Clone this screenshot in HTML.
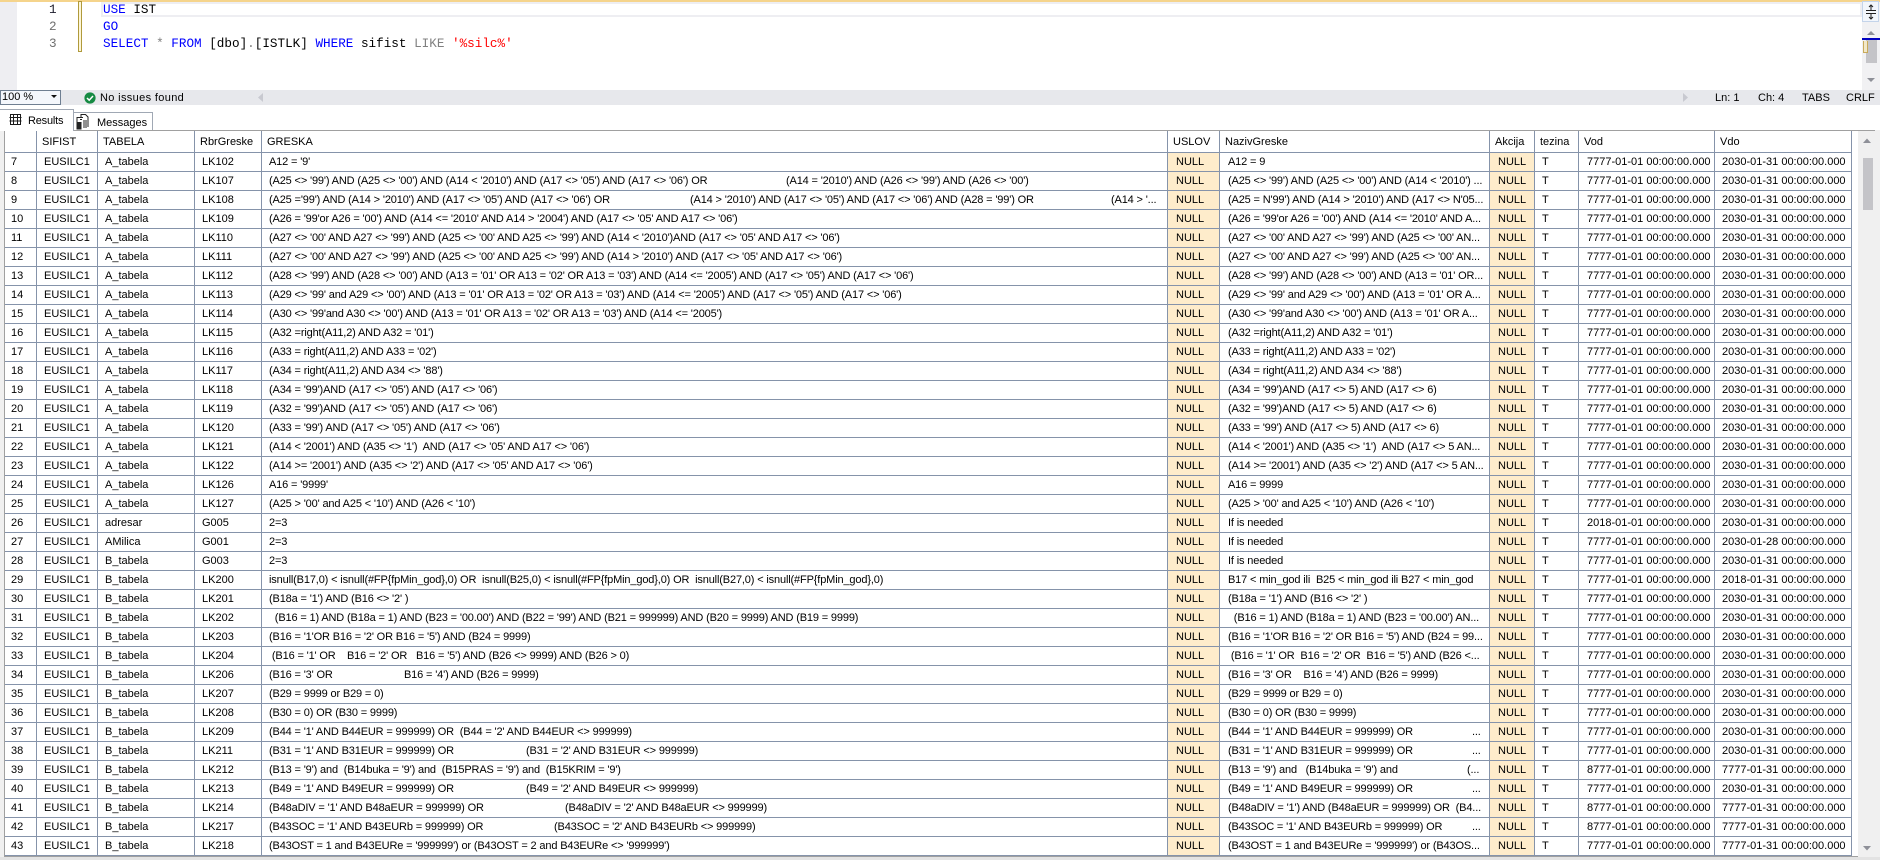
<!DOCTYPE html>
<html><head><meta charset="utf-8">
<style>
html,body{margin:0;padding:0;background:#fff;}
body{width:1880px;height:860px;overflow:hidden;position:relative;font-family:"Liberation Sans",sans-serif;font-size:11px;color:#000;}
.a{position:absolute;white-space:pre;}
#top{position:absolute;left:0;top:0;width:1880px;height:2px;background:#f5d48c;}
#gut{position:absolute;left:0;top:2px;width:17px;height:88px;background:#eeeef2;}
#cur{position:absolute;left:101px;top:2px;width:1757px;height:11px;border:2px solid #eeeef2;}
#chg{position:absolute;left:78px;top:1px;width:2px;height:49px;background:#fdf6d8;border:1px solid #b09a3c;}
.code{position:absolute;left:103px;font:12.65px/17px "Liberation Mono",monospace;white-space:pre;}
.ln{position:absolute;left:49px;width:10px;font:12.65px/17px "Liberation Mono",monospace;color:#6f6f6f;}
.k{color:#0000ff}.g{color:#808080}.s{color:#ff0000}
#status{position:absolute;left:0;top:90px;width:1880px;height:15px;background:#e7e8ec;}
#combo{position:absolute;left:0;top:90px;width:59px;height:13px;background:#f4f7fc;border:1px solid #6f7f92;}
#frame{position:absolute;left:4px;top:130px;width:1871px;height:727px;border:1px solid #a0a0a0;box-sizing:border-box;overflow:hidden;background:#fff;}
#tw{position:absolute;left:0;top:0;}
#lb{position:absolute;left:0;top:110px;width:4px;height:750px;background:#f0f0f0;}
#bb{position:absolute;left:0;top:857px;width:1880px;height:3px;background:#e3e3e3;}
#rb{position:absolute;left:1875px;top:130px;width:5px;height:730px;background:#f0f0f0;}
table{border-collapse:separate;border-spacing:0;table-layout:fixed;width:1847px;}
td,th{box-sizing:border-box;height:19px;padding:0 0 0 8px;border-right:1px solid #8593aa;border-bottom:1px solid #8593aa;white-space:pre;overflow:hidden;font-weight:normal;text-align:left;line-height:18px;position:relative;}
th{height:21px;padding-left:5px;padding-top:1px;line-height:20px;}
td:nth-child(1),th:nth-child(1){padding-left:6px;}
td:nth-child(2),td:nth-child(3),td:nth-child(4),td:nth-child(5),td:nth-child(9),td:nth-child(11){padding-left:7px;}
td:nth-child(5),td:nth-child(7){letter-spacing:-.15px;}
.n{background:#feeccb;}
.a2{position:absolute;top:0;line-height:18px;}
#vs{position:absolute;left:1858px;top:131px;width:17px;height:726px;background:#f0f0f0;}
#vt{position:absolute;left:1863px;top:158px;width:10px;height:52px;background:#c4c4c8;}
.tab{position:absolute;box-sizing:border-box;background:#fff;border:1px solid #a0a8b4;border-bottom:none;}
</style></head><body>
<div id="top"></div><div id="gut"></div><div id="cur"></div><div id="chg"></div>
<div class="ln" style="top:1px;color:#1c1c2c">1</div><div class="ln" style="top:18px">2</div><div class="ln" style="top:35px">3</div>
<div class="code" style="top:1px"><span class="k">USE</span> IST</div>
<div class="code" style="top:18px"><span class="k">GO</span></div>
<div class="code" style="top:35px"><span class="k">SELECT</span> <span class="g">*</span> <span class="k">FROM</span> [dbo]<span class="g">.</span>[ISTLK] <span class="k">WHERE</span> sifist <span class="g">LIKE</span> <span class="s">'%silc%'</span></div>

<div style="position:absolute;left:1862px;top:2px;width:18px;height:88px;background:#f1f1f3"></div>
<div style="position:absolute;left:1862px;top:1px;width:17px;height:21px;background:#f2f6fc;border:1px solid #c4d4ea;box-sizing:border-box"></div>
<svg style="position:absolute;left:1862px;top:2px" width="18" height="20"><path d="M4 8.5H14M4 11.5H14M9 3V8M9 12V17M7 5L9 3L11 5M7 15L9 17L11 15" fill="none" stroke="#202020"/></svg>
<svg style="position:absolute;left:1862px;top:28px" width="18" height="8"><path d="M5 7L9 3L13 7Z" fill="#8e9098"/></svg>
<div style="position:absolute;left:1866px;top:40px;width:11px;height:23px;background:#c4c4c8"></div>
<div style="position:absolute;left:1862px;top:38px;width:18px;height:2px;background:#0000c0"></div>
<div style="position:absolute;left:1863px;top:41px;width:5px;height:12px;border:1px solid #c8aa5a;border-top:none;box-sizing:border-box;background:#f2e8c8"></div>
<svg style="position:absolute;left:1862px;top:77px" width="18" height="8"><path d="M5 1L9 5L13 1Z" fill="#8e9098"/></svg>

<div id="status"></div>
<div id="combo"></div>
<div class="a" style="left:2px;top:91px;line-height:13px">100 %</div>
<svg style="position:absolute;left:51px;top:95px" width="8" height="5"><path d="M0 0H6L3 3Z" fill="#111"/></svg>
<svg style="position:absolute;left:84px;top:92px" width="12" height="12"><circle cx="6" cy="6" r="5.6" fill="#168a43"/><path d="M3 6L5.2 8.2L9 4" fill="none" stroke="#fff" stroke-width="1.5"/></svg>
<div class="a" style="left:100px;top:91px;line-height:14px;letter-spacing:.35px">No issues found</div>
<svg style="position:absolute;left:258px;top:93px" width="6" height="10"><path d="M5 0V9L0 4.5Z" fill="#c8c9d0"/></svg>
<svg style="position:absolute;left:1683px;top:93px" width="6" height="10"><path d="M0 0V9L5 4.5Z" fill="#c8c9d0"/></svg>
<div class="a" style="left:1715px;top:91px;line-height:14px">Ln: 1</div>
<div class="a" style="left:1758px;top:91px;line-height:14px">Ch: 4</div>
<div class="a" style="left:1802px;top:91px;line-height:14px">TABS</div>
<div class="a" style="left:1846px;top:91px;line-height:14px">CRLF</div>

<div id="lb"></div><div id="rb"></div>
<div class="tab" style="left:73px;top:112px;width:80px;height:19px;"></div>
<div class="tab" style="left:0;top:109px;width:74px;height:22px;z-index:3;border-left:none"></div>
<svg style="position:absolute;left:9px;top:114px;z-index:4" width="13" height="12"><path d="M1.5 .5H11.5V10.5H1.5ZM.5 3.5H12.5M.5 7H12.5M4.5 .5V11M8.5 .5V11" fill="none" stroke="#1a1a1a"/></svg>
<div class="a" style="left:28px;top:114px;line-height:14px;z-index:4;letter-spacing:-.2px">Results</div>
<svg style="position:absolute;left:76px;top:114px;z-index:4" width="13" height="16"><path d="M5 3.5V.5H9.5L12 3V13M7 3.5H1V15M4 5.5H6" fill="none" stroke="#222"/><rect x=".5" y="8" width="5" height="7.5" fill="#222"/><path d="M7 7H11M7 9H11M7 11H11M7 13H11" stroke="#222"/></svg>
<div class="a" style="left:97px;top:116px;line-height:14px;z-index:4">Messages</div>

<div id="frame"><div id="tw" style="left:0;top:0">
<table><colgroup><col style="width:32px"><col style="width:61px"><col style="width:97px"><col style="width:67px"><col style="width:906px"><col style="width:52px"><col style="width:270px"><col style="width:45px"><col style="width:44px"><col style="width:136px"><col style="width:137px"></colgroup>
<tr><th></th><th>SIFIST</th><th>TABELA</th><th>RbrGreske</th><th>GRESKA</th><th>USLOV</th><th>NazivGreske</th><th>Akcija</th><th>tezina</th><th>Vod</th><th>Vdo</th></tr>
<tr><td>7</td><td>EUSILC1</td><td>A_tabela</td><td>LK102</td><td>A12 = '9'</td><td class="n">NULL</td><td>A12 = 9</td><td class="n">NULL</td><td>T</td><td>7777-01-01 00:00:00.000</td><td>2030-01-31 00:00:00.000</td></tr>
<tr><td>8</td><td>EUSILC1</td><td>A_tabela</td><td>LK107</td><td>(A25 &lt;&gt; '99') AND (A25 &lt;&gt; '00') AND (A14 &lt; '2010') AND (A17 &lt;&gt; '05') AND (A17 &lt;&gt; '06') OR<span class="a2" style="left:524px">(A14 = '2010') AND (A26 &lt;&gt; '99') AND (A26 &lt;&gt; '00')</span></td><td class="n">NULL</td><td>(A25 &lt;&gt; '99') AND (A25 &lt;&gt; '00') AND (A14 &lt; '2010') ...</td><td class="n">NULL</td><td>T</td><td>7777-01-01 00:00:00.000</td><td>2030-01-31 00:00:00.000</td></tr>
<tr><td>9</td><td>EUSILC1</td><td>A_tabela</td><td>LK108</td><td>(A25 ='99') AND (A14 &gt; '2010') AND (A17 &lt;&gt; '05') AND (A17 &lt;&gt; '06') OR<span class="a2" style="left:428px">(A14 &gt; '2010') AND (A17 &lt;&gt; '05') AND (A17 &lt;&gt; '06') AND (A28 = '99') OR</span><span class="a2" style="left:849px">(A14 &gt; '...</span></td><td class="n">NULL</td><td>(A25 = N'99') AND (A14 &gt; '2010') AND (A17 &lt;&gt; N'05...</td><td class="n">NULL</td><td>T</td><td>7777-01-01 00:00:00.000</td><td>2030-01-31 00:00:00.000</td></tr>
<tr><td>10</td><td>EUSILC1</td><td>A_tabela</td><td>LK109</td><td>(A26 = '99'or A26 = '00') AND (A14 &lt;= '2010' AND A14 &gt; '2004') AND (A17 &lt;&gt; '05' AND A17 &lt;&gt; '06')</td><td class="n">NULL</td><td>(A26 = '99'or A26 = '00') AND (A14 &lt;= '2010' AND A...</td><td class="n">NULL</td><td>T</td><td>7777-01-01 00:00:00.000</td><td>2030-01-31 00:00:00.000</td></tr>
<tr><td>11</td><td>EUSILC1</td><td>A_tabela</td><td>LK110</td><td>(A27 &lt;&gt; '00' AND A27 &lt;&gt; '99') AND (A25 &lt;&gt; '00' AND A25 &lt;&gt; '99') AND (A14 &lt; '2010')AND (A17 &lt;&gt; '05' AND A17 &lt;&gt; '06')</td><td class="n">NULL</td><td>(A27 &lt;&gt; '00' AND A27 &lt;&gt; '99') AND (A25 &lt;&gt; '00' AN...</td><td class="n">NULL</td><td>T</td><td>7777-01-01 00:00:00.000</td><td>2030-01-31 00:00:00.000</td></tr>
<tr><td>12</td><td>EUSILC1</td><td>A_tabela</td><td>LK111</td><td>(A27 &lt;&gt; '00' AND A27 &lt;&gt; '99') AND (A25 &lt;&gt; '00' AND A25 &lt;&gt; '99') AND (A14 &gt; '2010') AND (A17 &lt;&gt; '05' AND A17 &lt;&gt; '06')</td><td class="n">NULL</td><td>(A27 &lt;&gt; '00' AND A27 &lt;&gt; '99') AND (A25 &lt;&gt; '00' AN...</td><td class="n">NULL</td><td>T</td><td>7777-01-01 00:00:00.000</td><td>2030-01-31 00:00:00.000</td></tr>
<tr><td>13</td><td>EUSILC1</td><td>A_tabela</td><td>LK112</td><td>(A28 &lt;&gt; '99') AND (A28 &lt;&gt; '00') AND (A13 = '01' OR A13 = '02' OR A13 = '03') AND (A14 &lt;= '2005') AND (A17 &lt;&gt; '05') AND (A17 &lt;&gt; '06')</td><td class="n">NULL</td><td>(A28 &lt;&gt; '99') AND (A28 &lt;&gt; '00') AND (A13 = '01' OR...</td><td class="n">NULL</td><td>T</td><td>7777-01-01 00:00:00.000</td><td>2030-01-31 00:00:00.000</td></tr>
<tr><td>14</td><td>EUSILC1</td><td>A_tabela</td><td>LK113</td><td>(A29 &lt;&gt; '99' and A29 &lt;&gt; '00') AND (A13 = '01' OR A13 = '02' OR A13 = '03') AND (A14 &lt;= '2005') AND (A17 &lt;&gt; '05') AND (A17 &lt;&gt; '06')</td><td class="n">NULL</td><td>(A29 &lt;&gt; '99' and A29 &lt;&gt; '00') AND (A13 = '01' OR A...</td><td class="n">NULL</td><td>T</td><td>7777-01-01 00:00:00.000</td><td>2030-01-31 00:00:00.000</td></tr>
<tr><td>15</td><td>EUSILC1</td><td>A_tabela</td><td>LK114</td><td>(A30 &lt;&gt; '99'and A30 &lt;&gt; '00') AND (A13 = '01' OR A13 = '02' OR A13 = '03') AND (A14 &lt;= '2005')</td><td class="n">NULL</td><td>(A30 &lt;&gt; '99'and A30 &lt;&gt; '00') AND (A13 = '01' OR A...</td><td class="n">NULL</td><td>T</td><td>7777-01-01 00:00:00.000</td><td>2030-01-31 00:00:00.000</td></tr>
<tr><td>16</td><td>EUSILC1</td><td>A_tabela</td><td>LK115</td><td>(A32 =right(A11,2) AND A32 = '01')</td><td class="n">NULL</td><td>(A32 =right(A11,2) AND A32 = '01')</td><td class="n">NULL</td><td>T</td><td>7777-01-01 00:00:00.000</td><td>2030-01-31 00:00:00.000</td></tr>
<tr><td>17</td><td>EUSILC1</td><td>A_tabela</td><td>LK116</td><td>(A33 = right(A11,2) AND A33 = '02')</td><td class="n">NULL</td><td>(A33 = right(A11,2) AND A33 = '02')</td><td class="n">NULL</td><td>T</td><td>7777-01-01 00:00:00.000</td><td>2030-01-31 00:00:00.000</td></tr>
<tr><td>18</td><td>EUSILC1</td><td>A_tabela</td><td>LK117</td><td>(A34 = right(A11,2) AND A34 &lt;&gt; '88')</td><td class="n">NULL</td><td>(A34 = right(A11,2) AND A34 &lt;&gt; '88')</td><td class="n">NULL</td><td>T</td><td>7777-01-01 00:00:00.000</td><td>2030-01-31 00:00:00.000</td></tr>
<tr><td>19</td><td>EUSILC1</td><td>A_tabela</td><td>LK118</td><td>(A34 = '99')AND (A17 &lt;&gt; '05') AND (A17 &lt;&gt; '06')</td><td class="n">NULL</td><td>(A34 = '99')AND (A17 &lt;&gt; 5) AND (A17 &lt;&gt; 6)</td><td class="n">NULL</td><td>T</td><td>7777-01-01 00:00:00.000</td><td>2030-01-31 00:00:00.000</td></tr>
<tr><td>20</td><td>EUSILC1</td><td>A_tabela</td><td>LK119</td><td>(A32 = '99')AND (A17 &lt;&gt; '05') AND (A17 &lt;&gt; '06')</td><td class="n">NULL</td><td>(A32 = '99')AND (A17 &lt;&gt; 5) AND (A17 &lt;&gt; 6)</td><td class="n">NULL</td><td>T</td><td>7777-01-01 00:00:00.000</td><td>2030-01-31 00:00:00.000</td></tr>
<tr><td>21</td><td>EUSILC1</td><td>A_tabela</td><td>LK120</td><td>(A33 = '99') AND (A17 &lt;&gt; '05') AND (A17 &lt;&gt; '06')</td><td class="n">NULL</td><td>(A33 = '99') AND (A17 &lt;&gt; 5) AND (A17 &lt;&gt; 6)</td><td class="n">NULL</td><td>T</td><td>7777-01-01 00:00:00.000</td><td>2030-01-31 00:00:00.000</td></tr>
<tr><td>22</td><td>EUSILC1</td><td>A_tabela</td><td>LK121</td><td>(A14 &lt; '2001') AND (A35 &lt;&gt; '1')  AND (A17 &lt;&gt; '05' AND A17 &lt;&gt; '06')</td><td class="n">NULL</td><td>(A14 &lt; '2001') AND (A35 &lt;&gt; '1')  AND (A17 &lt;&gt; 5 AN...</td><td class="n">NULL</td><td>T</td><td>7777-01-01 00:00:00.000</td><td>2030-01-31 00:00:00.000</td></tr>
<tr><td>23</td><td>EUSILC1</td><td>A_tabela</td><td>LK122</td><td>(A14 &gt;= '2001') AND (A35 &lt;&gt; '2') AND (A17 &lt;&gt; '05' AND A17 &lt;&gt; '06')</td><td class="n">NULL</td><td>(A14 &gt;= '2001') AND (A35 &lt;&gt; '2') AND (A17 &lt;&gt; 5 AN...</td><td class="n">NULL</td><td>T</td><td>7777-01-01 00:00:00.000</td><td>2030-01-31 00:00:00.000</td></tr>
<tr><td>24</td><td>EUSILC1</td><td>A_tabela</td><td>LK126</td><td>A16 = '9999'</td><td class="n">NULL</td><td>A16 = 9999</td><td class="n">NULL</td><td>T</td><td>7777-01-01 00:00:00.000</td><td>2030-01-31 00:00:00.000</td></tr>
<tr><td>25</td><td>EUSILC1</td><td>A_tabela</td><td>LK127</td><td>(A25 &gt; '00' and A25 &lt; '10') AND (A26 &lt; '10')</td><td class="n">NULL</td><td>(A25 &gt; '00' and A25 &lt; '10') AND (A26 &lt; '10')</td><td class="n">NULL</td><td>T</td><td>7777-01-01 00:00:00.000</td><td>2030-01-31 00:00:00.000</td></tr>
<tr><td>26</td><td>EUSILC1</td><td>adresar</td><td>G005</td><td>2=3</td><td class="n">NULL</td><td>If is needed</td><td class="n">NULL</td><td>T</td><td>2018-01-01 00:00:00.000</td><td>2030-01-31 00:00:00.000</td></tr>
<tr><td>27</td><td>EUSILC1</td><td>AMilica</td><td>G001</td><td>2=3</td><td class="n">NULL</td><td>If is needed</td><td class="n">NULL</td><td>T</td><td>7777-01-01 00:00:00.000</td><td>2030-01-28 00:00:00.000</td></tr>
<tr><td>28</td><td>EUSILC1</td><td>B_tabela</td><td>G003</td><td>2=3</td><td class="n">NULL</td><td>If is needed</td><td class="n">NULL</td><td>T</td><td>7777-01-01 00:00:00.000</td><td>2030-01-31 00:00:00.000</td></tr>
<tr><td>29</td><td>EUSILC1</td><td>B_tabela</td><td>LK200</td><td>isnull(B17,0) &lt; isnull(#FP{fpMin_god},0) OR  isnull(B25,0) &lt; isnull(#FP{fpMin_god},0) OR  isnull(B27,0) &lt; isnull(#FP{fpMin_god},0)</td><td class="n">NULL</td><td>B17 &lt; min_god ili  B25 &lt; min_god ili B27 &lt; min_god</td><td class="n">NULL</td><td>T</td><td>7777-01-01 00:00:00.000</td><td>2018-01-31 00:00:00.000</td></tr>
<tr><td>30</td><td>EUSILC1</td><td>B_tabela</td><td>LK201</td><td>(B18a = '1') AND (B16 &lt;&gt; '2' )</td><td class="n">NULL</td><td>(B18a = '1') AND (B16 &lt;&gt; '2' )</td><td class="n">NULL</td><td>T</td><td>7777-01-01 00:00:00.000</td><td>2030-01-31 00:00:00.000</td></tr>
<tr><td>31</td><td>EUSILC1</td><td>B_tabela</td><td>LK202</td><td>  (B16 = 1) AND (B18a = 1) AND (B23 = '00.00') AND (B22 = '99') AND (B21 = 999999) AND (B20 = 9999) AND (B19 = 9999)</td><td class="n">NULL</td><td>  (B16 = 1) AND (B18a = 1) AND (B23 = '00.00') AN...</td><td class="n">NULL</td><td>T</td><td>7777-01-01 00:00:00.000</td><td>2030-01-31 00:00:00.000</td></tr>
<tr><td>32</td><td>EUSILC1</td><td>B_tabela</td><td>LK203</td><td>(B16 = '1'OR B16 = '2' OR B16 = '5') AND (B24 = 9999)</td><td class="n">NULL</td><td>(B16 = '1'OR B16 = '2' OR B16 = '5') AND (B24 = 99...</td><td class="n">NULL</td><td>T</td><td>7777-01-01 00:00:00.000</td><td>2030-01-31 00:00:00.000</td></tr>
<tr><td>33</td><td>EUSILC1</td><td>B_tabela</td><td>LK204</td><td> (B16 = '1' OR<span class="a2" style="left:85px">B16 = '2' OR</span><span class="a2" style="left:154px">B16 = '5') AND (B26 &lt;&gt; 9999) AND (B26 &gt; 0)</span></td><td class="n">NULL</td><td> (B16 = '1' OR  B16 = '2' OR  B16 = '5') AND (B26 &lt;...</td><td class="n">NULL</td><td>T</td><td>7777-01-01 00:00:00.000</td><td>2030-01-31 00:00:00.000</td></tr>
<tr><td>34</td><td>EUSILC1</td><td>B_tabela</td><td>LK206</td><td>(B16 = '3' OR<span class="a2" style="left:142px">B16 = '4') AND (B26 = 9999)</span></td><td class="n">NULL</td><td>(B16 = '3' OR    B16 = '4') AND (B26 = 9999)</td><td class="n">NULL</td><td>T</td><td>7777-01-01 00:00:00.000</td><td>2030-01-31 00:00:00.000</td></tr>
<tr><td>35</td><td>EUSILC1</td><td>B_tabela</td><td>LK207</td><td>(B29 = 9999 or B29 = 0)</td><td class="n">NULL</td><td>(B29 = 9999 or B29 = 0)</td><td class="n">NULL</td><td>T</td><td>7777-01-01 00:00:00.000</td><td>2030-01-31 00:00:00.000</td></tr>
<tr><td>36</td><td>EUSILC1</td><td>B_tabela</td><td>LK208</td><td>(B30 = 0) OR (B30 = 9999)</td><td class="n">NULL</td><td>(B30 = 0) OR (B30 = 9999)</td><td class="n">NULL</td><td>T</td><td>7777-01-01 00:00:00.000</td><td>2030-01-31 00:00:00.000</td></tr>
<tr><td>37</td><td>EUSILC1</td><td>B_tabela</td><td>LK209</td><td>(B44 = '1' AND B44EUR = 999999) OR  (B44 = '2' AND B44EUR &lt;&gt; 999999)</td><td class="n">NULL</td><td>(B44 = '1' AND B44EUR = 999999) OR<span class="a2" style="left:252px">...</span></td><td class="n">NULL</td><td>T</td><td>7777-01-01 00:00:00.000</td><td>2030-01-31 00:00:00.000</td></tr>
<tr><td>38</td><td>EUSILC1</td><td>B_tabela</td><td>LK211</td><td>(B31 = '1' AND B31EUR = 999999) OR<span class="a2" style="left:264px">(B31 = '2' AND B31EUR &lt;&gt; 999999)</span></td><td class="n">NULL</td><td>(B31 = '1' AND B31EUR = 999999) OR<span class="a2" style="left:252px">...</span></td><td class="n">NULL</td><td>T</td><td>7777-01-01 00:00:00.000</td><td>2030-01-31 00:00:00.000</td></tr>
<tr><td>39</td><td>EUSILC1</td><td>B_tabela</td><td>LK212</td><td>(B13 = '9') and  (B14buka = '9') and  (B15PRAS = '9') and  (B15KRIM = '9')</td><td class="n">NULL</td><td>(B13 = '9') and   (B14buka = '9') and<span class="a2" style="left:247px">(...</span></td><td class="n">NULL</td><td>T</td><td>8777-01-01 00:00:00.000</td><td>7777-01-31 00:00:00.000</td></tr>
<tr><td>40</td><td>EUSILC1</td><td>B_tabela</td><td>LK213</td><td>(B49 = '1' AND B49EUR = 999999) OR<span class="a2" style="left:264px">(B49 = '2' AND B49EUR &lt;&gt; 999999)</span></td><td class="n">NULL</td><td>(B49 = '1' AND B49EUR = 999999) OR<span class="a2" style="left:252px">...</span></td><td class="n">NULL</td><td>T</td><td>7777-01-01 00:00:00.000</td><td>2030-01-31 00:00:00.000</td></tr>
<tr><td>41</td><td>EUSILC1</td><td>B_tabela</td><td>LK214</td><td>(B48aDIV = '1' AND B48aEUR = 999999) OR<span class="a2" style="left:303px">(B48aDIV = '2' AND B48aEUR &lt;&gt; 999999)</span></td><td class="n">NULL</td><td>(B48aDIV = '1') AND (B48aEUR = 999999) OR  (B4...</td><td class="n">NULL</td><td>T</td><td>8777-01-01 00:00:00.000</td><td>7777-01-31 00:00:00.000</td></tr>
<tr><td>42</td><td>EUSILC1</td><td>B_tabela</td><td>LK217</td><td>(B43SOC = '1' AND B43EURb = 999999) OR<span class="a2" style="left:292px">(B43SOC = '2' AND B43EURb &lt;&gt; 999999)</span></td><td class="n">NULL</td><td>(B43SOC = '1' AND B43EURb = 999999) OR<span class="a2" style="left:252px">...</span></td><td class="n">NULL</td><td>T</td><td>8777-01-01 00:00:00.000</td><td>7777-01-31 00:00:00.000</td></tr>
<tr><td>43</td><td>EUSILC1</td><td>B_tabela</td><td>LK218</td><td>(B43OST = 1 and B43EURe = '999999') or (B43OST = 2 and B43EURe &lt;&gt; '999999')</td><td class="n">NULL</td><td>(B43OST = 1 and B43EURe = '999999') or (B43OS...</td><td class="n">NULL</td><td>T</td><td>7777-01-01 00:00:00.000</td><td>7777-01-31 00:00:00.000</td></tr>
<tr><td></td><td></td><td></td><td></td><td></td><td class="n"></td><td></td><td class="n"></td><td></td><td></td><td></td></tr>
</table></div></div>
<div id="vs"></div><div id="vt"></div>
<svg style="position:absolute;left:1862px;top:137px" width="10" height="8"><path d="M1 6L5 1.5L9 6Z" fill="#8e9098"/></svg>
<svg style="position:absolute;left:1862px;top:844px" width="10" height="8"><path d="M1 2L5 6.5L9 2Z" fill="#8e9098"/></svg>
<div id="bb"></div>
</body></html>
